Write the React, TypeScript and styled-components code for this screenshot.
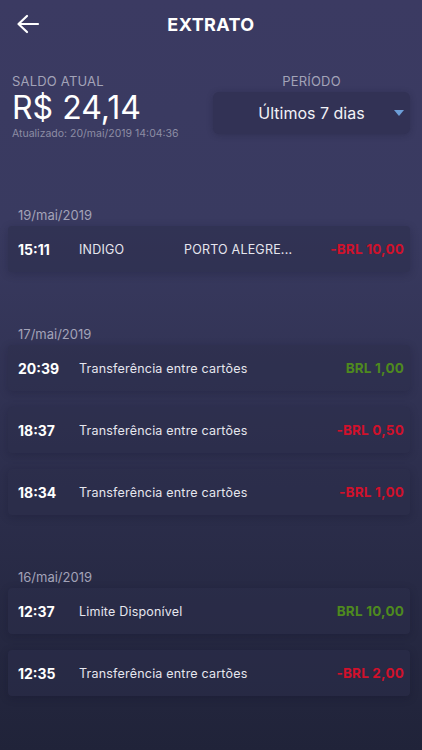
import styled, { createGlobalStyle } from "styled-components";

type Entry = {
  time: string;
  label: string;
  place?: string;
  amount: string;
  positive?: boolean;
};

type Group = {
  date: string;
  entries: Entry[];
};

const groups: Group[] = [
  {
    date: "19/mai/2019",
    entries: [
      { time: "15:11", label: "INDIGO", place: "PORTO ALEGRE...", amount: "-BRL 10,00" },
    ],
  },
  {
    date: "17/mai/2019",
    entries: [
      { time: "20:39", label: "Transferência entre cartões", amount: "BRL 1,00", positive: true },
      { time: "18:37", label: "Transferência entre cartões", amount: "-BRL 0,50" },
      { time: "18:34", label: "Transferência entre cartões", amount: "-BRL 1,00" },
    ],
  },
  {
    date: "16/mai/2019",
    entries: [
      { time: "12:37", label: "Limite Disponível", amount: "BRL 10,00", positive: true },
      { time: "12:35", label: "Transferência entre cartões", amount: "-BRL 2,00" },
    ],
  },
];

const App = () => {
  return (
    <>
      <GlobalStyle />
      <StyledScreen>
        <StyledHeader>
          <StyledBack aria-label="Voltar">
            <svg width="24" height="20" viewBox="0 0 24 20" fill="none">
              <path
                d="M22 10H3M11 2L2.5 10L11 18"
                stroke="#fff"
                strokeWidth="2.2"
                strokeLinecap="round"
                strokeLinejoin="round"
              />
            </svg>
          </StyledBack>
          <StyledTitle>EXTRATO</StyledTitle>
        </StyledHeader>

        <StyledSummary>
          <StyledBalance>
            <StyledCaption>SALDO ATUAL</StyledCaption>
            <StyledAmount>R$ 24,14</StyledAmount>
            <StyledUpdated>Atualizado: 20/mai/2019 14:04:36</StyledUpdated>
          </StyledBalance>
          <StyledPeriod>
            <StyledCaption>PERÍODO</StyledCaption>
            <StyledSelect>
              <span>Últimos 7 dias</span>
              <StyledCaret />
            </StyledSelect>
          </StyledPeriod>
        </StyledSummary>

        <StyledList>
          {groups.map((group) => (
            <StyledGroup key={group.date}>
              <StyledDate>{group.date}</StyledDate>
              {group.entries.map((entry) => (
                <StyledRow key={entry.time}>
                  <StyledTime>{entry.time}</StyledTime>
                  <StyledLabel $short={!!entry.place}>{entry.label}</StyledLabel>
                  {entry.place && <StyledPlace>{entry.place}</StyledPlace>}
                  <StyledValue $positive={entry.positive}>{entry.amount}</StyledValue>
                </StyledRow>
              ))}
            </StyledGroup>
          ))}
        </StyledList>
      </StyledScreen>
    </>
  );
};

export default App;

const GlobalStyle = createGlobalStyle`
  html, body {
    margin: 0;
    padding: 0;
    background: #212440;
  }
  body {
    font-family: Inter, "Liberation Sans", sans-serif;
    -webkit-font-smoothing: antialiased;
  }
`;

const StyledScreen = styled.div`
  width: 422px;
  min-height: 750px;
  box-sizing: border-box;
  background: linear-gradient(180deg, #3b3a62 0%, #393a60 30%, #2c2e4c 65%, #202339 100%);
  color: #fff;
  display: flex;
  flex-direction: column;
`;

const StyledHeader = styled.header`
  height: 49px;
  display: flex;
  align-items: center;
  justify-content: center;
  position: relative;
`;

const StyledBack = styled.button`
  position: absolute;
  left: 16px;
  top: 14px;
  background: none;
  border: 0;
  padding: 0;
  display: flex;
`;

const StyledTitle = styled.h1`
  margin: 0;
  font-size: 18px;
  font-weight: 700;
  letter-spacing: 0.4px;
`;

const StyledSummary = styled.section`
  display: flex;
  justify-content: space-between;
  padding: 24px 12px 0 12px;
`;

const StyledBalance = styled.div`
  display: flex;
  flex-direction: column;
`;

const StyledCaption = styled.div`
  font-size: 13px;
  line-height: 16px;
  color: #a3a3b8;
  letter-spacing: 0.2px;
`;

const StyledAmount = styled.div`
  font-size: 32px;
  line-height: 38px;
  font-weight: 400;
  color: #fff;
`;

const StyledUpdated = styled.div`
  font-size: 10.5px;
  line-height: 12px;
  color: #8d8da4;
  margin-top: 1px;
`;

const StyledPeriod = styled.div`
  width: 197px;
  display: flex;
  flex-direction: column;
  align-items: center;
  gap: 3px;
`;

const StyledSelect = styled.div`
  width: 100%;
  height: 42px;
  box-sizing: border-box;
  border-radius: 6px;
  background: #323255;
  box-shadow: 0 1px 6px rgba(20, 20, 40, 0.25);
  display: flex;
  align-items: center;
  justify-content: center;
  position: relative;
  font-size: 16px;
  color: #f2f2f7;
`;

const StyledCaret = styled.span`
  position: absolute;
  right: 6px;
  top: 18px;
  width: 0;
  height: 0;
  border-left: 5.5px solid transparent;
  border-right: 5.5px solid transparent;
  border-top: 6px solid #6d9fd8;
`;

const StyledList = styled.main`
  display: flex;
  flex-direction: column;
  padding: 64px 12px 0 8px;
  gap: 51px;
`;

const StyledGroup = styled.section`
  display: flex;
  flex-direction: column;
  gap: 16px;
`;

const StyledDate = styled.div`
  height: 22px;
  line-height: 22px;
  padding-left: 10px;
  font-size: 13px;
  color: #a3a3b8;
  margin-bottom: -16px;
`;

const StyledRow = styled.div`
  height: 46px;
  display: flex;
  align-items: center;
  padding: 0 6px 0 10px;
  border-radius: 4px;
  background: rgba(44, 45, 74, 0.55);
  box-shadow: 0 2px 8px rgba(15, 15, 35, 0.22);
`;

const StyledTime = styled.span`
  width: 61px;
  font-size: 14px;
  font-weight: 700;
  color: #fff;
`;

const StyledLabel = styled.span<{ $short: boolean }>`
  ${({ $short }) => ($short ? "width: 105px;" : "flex: 1;")}
  font-size: 12.5px;
  color: #e6e6ee;
  letter-spacing: 0.2px;
`;

const StyledPlace = styled.span`
  flex: 1;
  font-size: 12.5px;
  color: #e6e6ee;
  letter-spacing: 0.2px;
`;

const StyledValue = styled.span<{ $positive?: boolean }>`
  font-size: 13.5px;
  font-weight: 700;
  color: ${({ $positive }) => ($positive ? "#4e8a1e" : "#d0112b")};
  letter-spacing: 0.2px;
`;
